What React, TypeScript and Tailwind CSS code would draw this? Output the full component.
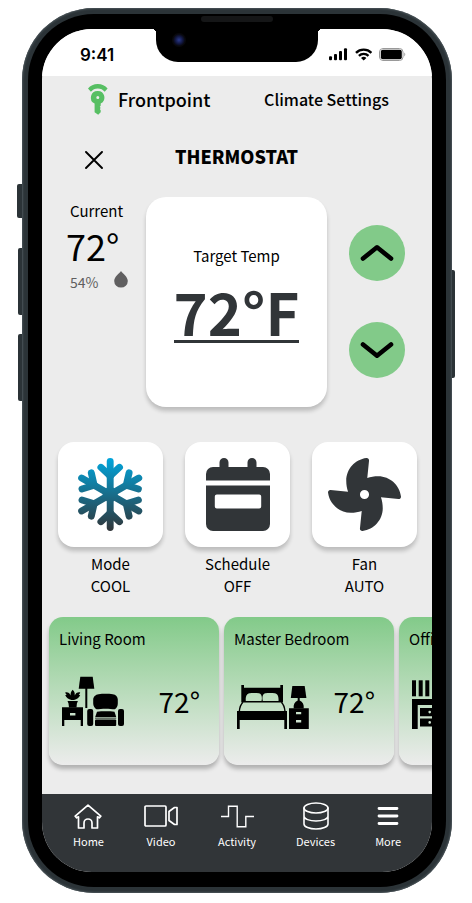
import type { ReactNode } from "react";
import { FaFan } from "react-icons/fa";

function FrontpointLogo() {
  return (
    <svg width="20" height="31" viewBox="0 0 20 31" fill="#57bf63" aria-hidden="true">
      <path d="M0 4.600C2.500 1.600 5.600.1 9.800.1s7.300 1.500 9.800 4.500l-2.900 3.200C15 5.700 12.700 4.500 9.800 4.500S4.600 5.700 2.900 7.800Z" />
      <path
        fillRule="evenodd"
        d="M9.800 6.900a6.700 6.700 0 0 1 2.900 12.700v2.100l-.9 1 .9 1.200-.9 1.100.9 1.200v2l-2.500 2.500-3.600-2.500v-8.600A6.700 6.700 0 0 1 9.800 6.900Zm0 5.200a1.500 1.500 0 1 0 0 3 1.500 1.500 0 0 0 0-3Z"
      />
    </svg>
  );
}

function StatusIcons() {
  return (
    <svg width="77" height="13" viewBox="0 0 77 13" aria-hidden="true">
      <rect x="0" y="8.300" width="3" height="4" rx="1" />
      <rect x="5" y="6" width="3" height="6.300" rx="1" />
      <rect x="10" y="3" width="3" height="9.300" rx="1" />
      <rect x="15" y="0.300" width="3" height="12" rx="1" />
      <g fill="none" stroke="#000" strokeWidth="2.400">
        <path d="M27 4.800a11 11 0 0 1 15.400 0" />
        <path d="M29.900 7.800a7 7 0 0 1 9.600 0" />
      </g>
      <path d="M32 9.900a4 4 0 0 1 5.400 0L34.700 12.600Z" />
      <rect x="50.500" y="0.500" width="23.500" height="12" rx="3.500" fill="none" stroke="#999" />
      <rect x="51.800" y="1.800" width="21" height="9.400" rx="2" />
      <path d="M75.300 4.600c1.300.5 1.300 3.300 0 3.800Z" fill="#999" />
    </svg>
  );
}

function SnowflakeIcon() {
  return (
    <svg width="65" height="73" viewBox="0 0 65 73" aria-hidden="true">
      <defs>
        <linearGradient id="ice" x1="0" y1="0" x2="0" y2="1">
          <stop offset="0" stopColor="#00a5dc" />
          <stop offset="1" stopColor="#313538" />
        </linearGradient>
        <mask id="flake">
          <g stroke="#fff" strokeWidth="6.900" strokeLinecap="round" strokeLinejoin="round" fill="none">
            {[0, 60, 120, 180, 240, 300].map((angle) => (
              <g key={angle} transform={`rotate(${angle} 32.2 36.5)`}>
                <path d="M32.200 36.500V3.500" />
                <path d="M22.900 9.300l9.300 8.700 9.300-8.700" />
                <path d="M28.600 20l3.600-6 3.600 6Z" fill="#fff" strokeWidth="0" />
              </g>
            ))}
            <circle cx="32.200" cy="36.500" r="7.500" fill="#fff" strokeWidth="0" />
          </g>
        </mask>
      </defs>
      <rect width="65" height="73" fill="url(#ice)" mask="url(#flake)" />
    </svg>
  );
}

function CalendarIcon() {
  return (
    <svg width="64" height="73" viewBox="0 0 64 73" fill="#313538" aria-hidden="true">
      <path d="M0 22.500V16a7 7 0 0 1 7-7h6.500V4.500a4.500 4.500 0 0 1 9 0V9h19V4.500a4.500 4.500 0 0 1 9 0V9H57a7 7 0 0 1 7 7v6.500Z" />
      <path
        fillRule="evenodd"
        d="M0 27.500h64V66a7 7 0 0 1-7 7H7a7 7 0 0 1-7-7ZM10.800 36.500a2 2 0 0 0-2 2v10a2 2 0 0 0 2 2h42.400a2 2 0 0 0 2-2v-10a2 2 0 0 0-2-2Z"
      />
    </svg>
  );
}

function LivingRoomIcon() {
  return (
    <svg width="62" height="53" viewBox="0 0 62 53" aria-hidden="true">
      <path d="M18.300.7h12.400l1.600 12H16.700Z" />
      <rect x="23.300" y="12" width="2" height="20" />
      <path d="M10.700 13.700c2 2 2.400 4 1.900 5.800l1.800-2.400c1.300-.8 2.600-.9 3.800-.6-.3 1-.7 1.800-1.500 2.500h1.500c-.9 2.400-3.300 4.500-6.200 5H9.400c-2.900-.5-5.300-2.600-6.200-5h1.500c-.8-.7-1.200-1.500-1.500-2.500 1.200-.3 2.500-.2 3.800.6l1.800 2.400c-.5-1.800-.1-3.800 1.900-5.800Z" />
      <path d="M5.500 25h10.400l-1 2.500-.4 4H7l-.5-4Z" />
      <path
        fillRule="evenodd"
        d="M0 31.300h21V50h-2.300v-6H2.300v6H0ZM8 37v2.400h5.400V37Z"
      />
      <path d="M36.500 18.200c4.500-.5 9.800-.5 14.300 0 3 .4 5 2.600 5 5.300v4c0 2-1 5-3 5.800-5-.9-13.300-.9-18.300 0-2-.8-3.300-3.800-3.300-5.800v-4c0-2.700 2.300-4.900 5.300-5.300Z" />
      <rect x="25.200" y="33" width="6" height="17" rx="2" />
      <rect x="56" y="33" width="6" height="17" rx="2" />
      <path d="M35 35.800c5-.6 12.500-.6 17.500 0l1.700 5.200H33.200Z" />
      <rect x="33" y="43.500" width="21.200" height="6.500" rx="1" />
      <rect x="33" y="41.700" width="21.200" height="0.800" />
    </svg>
  );
}

function BedroomIcon() {
  return (
    <svg width="72" height="44" viewBox="0 0 72 44" className="shrink-0" aria-hidden="true">
      <path
        fillRule="evenodd"
        d="M4.300 0H7v2.700h36.300V0H46v17.500H4.300ZM8.800 16H24.500c1-4 0-7.500-2.500-7.800-3.300-.4-6.500-.4-9.500 0C9.500 8.600 8.500 12 8.800 16ZM25.800 16H41.500c.3-4-.7-7.400-3.700-7.800-3-.4-6.200-.4-9.500 0-2.500.3-3.500 3.800-2.500 7.800Z"
      />
      <path d="M2.300 26.500C2.800 21.500 4 19 6 17.300M48 26.500c-.5-5-1.700-7.500-3.700-9.200" fill="none" stroke="#000" strokeWidth="1.400" />
      <path d="M0 26h50v18h-2.700v-9H2.700v9H0Z" />
      <path d="M55.300 1h12.400l1.700 12H53.800Z" />
      <path d="M60.700 13h2v2.500c3 1.200 4.500 4 4 8H56.700c-.5-4 1-6.800 4-8Z" />
      <path
        fillRule="evenodd"
        d="M52 23.300h19.800V44H52ZM59 26.900v2.400h5.200v-2.400ZM59 35v2.400h5.200V35Z"
      />
    </svg>
  );
}

function OfficeIcon() {
  return (
    <svg width="60" height="49" viewBox="0 0 60 49" className="shrink-0" aria-hidden="true">
      <rect x="0" y="0.300" width="4" height="16" />
      <rect x="6.700" y="0.300" width="4" height="16" />
      <rect x="13.300" y="0.300" width="4" height="16" />
      <path d="M0 19h60v30h-5.700V25H5.700v24H0Z" />
      <path
        fillRule="evenodd"
        d="M8 28h20v8.300H8ZM17.700 30.800a1.300 1.300 0 1 0 0 2.600 1.300 1.300 0 0 0 0-2.600ZM8 38.500h20v8H8ZM17.700 41.100a1.300 1.300 0 1 0 0 2.600 1.300 1.300 0 0 0 0-2.600Z"
      />
    </svg>
  );
}

function Chevron({ up = false }: { up?: boolean }) {
  return (
    <svg width="34" height="18" viewBox="0 0 34 18" fill="none" stroke="#000" strokeWidth="4.600" strokeLinecap="round" strokeLinejoin="round" aria-hidden="true">
      <path d={up ? "M3 14.500L17 3.300l14 11.200" : "M3 3.500l14 11.200L31 3.500"} />
    </svg>
  );
}

function ControlTile({ icon, name, value }: { icon: ReactNode; name: string; value: string }) {
  return (
    <button type="button" className="flex flex-1 flex-col items-center text-[15px] leading-[22px]">
      <span className="mb-[6px] flex h-[105px] w-full items-center justify-center rounded-2xl bg-white shadow-[0_4px_4px_rgba(0,0,0,0.2)]">
        {icon}
      </span>
      <span>{name}</span>
      <span>{value}</span>
    </button>
  );
}

function RoomCard({ name, icon, temp }: { name: string; icon: ReactNode; temp: string }) {
  return (
    <article className="h-[148px] w-[170px] shrink-0 rounded-[14px] bg-linear-to-b from-[#82ca89] to-[#ececec] px-[10px] pt-3 shadow-[0_4px_4px_rgba(0,0,0,0.25)]">
      <h2 className="text-[15px] leading-5 whitespace-nowrap">{name}</h2>
      <div className="mt-6 flex h-14 items-end justify-between pr-[9px] pl-[3px]">
        {icon}
        <span className="pb-3 text-[28px] leading-8">{temp}</span>
      </div>
    </article>
  );
}

function NavItem({ label, children }: { label: string; children: ReactNode }) {
  return (
    <a href="#" className="flex flex-col items-center text-[11px] leading-4 text-white">
      <span className="flex h-7 items-center">{children}</span>
      <span className="mt-[3px]">{label}</span>
    </a>
  );
}

const line = { fill: "none", stroke: "#fff", strokeLinecap: "round", strokeLinejoin: "round" } as const;

export default function App() {
  return (
    <div className="bg-white pt-2 pr-5 pb-[10px] pl-[22px] font-['Noto_Sans_CJK_JP','Noto_Sans_CJK_SC',sans-serif] text-black">
      <div className="relative rounded-[72px] bg-[#2b3337] p-[6px] shadow-[inset_0_0_2px_1px_#4b555a]">
        <span className="absolute top-44 -left-[5px] h-[34px] w-[5px] rounded-l-xs bg-[#2b3337]" />
        <span className="absolute top-60 -left-1 h-[67px] w-1 rounded-l-xs bg-[#2b3337]" />
        <span className="absolute top-[326px] -left-1 h-[67px] w-1 rounded-l-xs bg-[#2b3337]" />
        <span className="absolute top-[262px] -right-[3px] h-[108px] w-[3px] rounded-r-xs bg-[#2b3337]" />

        <div className="relative rounded-[66px] bg-black px-[14px] py-[15px]">
          <span className="absolute top-[2px] left-1/2 h-[6px] w-[72px] -translate-x-1/2 rounded-full bg-[#151617]" />

          <div className="relative overflow-hidden rounded-[50px] bg-[#ececec]">
            <div className="absolute top-0 left-1/2 h-[33px] w-[162px] -translate-x-1/2 rounded-b-[22px] bg-black">
              <span className="absolute top-0 -left-1 size-1 bg-[radial-gradient(circle_at_0_100%,transparent_4px,#000_4px)]" />
              <span className="absolute top-0 -right-1 size-1 bg-[radial-gradient(circle_at_100%_100%,transparent_4px,#000_4px)]" />
              <span className="absolute top-1 left-4 size-[14px] rounded-full bg-[radial-gradient(circle,#2b3a8c_0,#10153c_4px,#08080c_6px)]" />
            </div>

            <div className="flex h-[47px] items-center justify-between bg-white pt-1 pr-[26px] pl-[38px]">
              <span className="font-['Inter',sans-serif] text-[17px] leading-5 font-semibold">9:41</span>
              <StatusIcons />
            </div>

            <header className="flex h-[46px] items-center justify-between pr-[43px] pl-[46px]">
              <div className="flex items-center gap-[10px]">
                <FrontpointLogo />
                <span className="text-lg leading-6 font-medium">Frontpoint</span>
              </div>
              <span className="text-base leading-6 font-medium">Climate Settings</span>
            </header>

            <main>
              <div className="grid h-[75px] grid-cols-[104px_1fr_105px] items-center pb-1">
                <button type="button" aria-label="Close" className="flex justify-center pt-1">
                  <svg width="18" height="18" viewBox="0 0 18 18" stroke="#000" strokeWidth="1.900" strokeLinecap="round" aria-hidden="true">
                    <path d="M1 1l16 16M17 1L1 17" />
                  </svg>
                </button>
                <h1 className="pb-1 text-center text-lg leading-6 font-black">THERMOSTAT</h1>
              </div>

              <section className="grid h-[210px] grid-cols-[104px_1fr_105px]">
                <div>
                  <p className="mt-1 pl-7 text-[15px] leading-5">Current</p>
                  <p className="mt-1 pl-6 text-4xl leading-10">72°</p>
                  <div className="mt-[6px] flex items-center gap-4 pl-7 text-sm leading-5 text-[#605f60]">
                    <span>54%</span>
                    <svg width="14" height="17" viewBox="0 0 14 17" className="mb-1" fill="#605f60" aria-hidden="true">
                      <path d="M7 0c1.500 2.500 6.800 5.500 6.800 10a6.800 6.600 0 0 1-13.600 0C.2 5.500 5.500 2.500 7 0Z" />
                    </svg>
                  </div>
                </div>

                <div className="flex flex-col items-center rounded-[20px] bg-white pt-[47px] shadow-[0_4px_4px_rgba(0,0,0,0.2)]">
                  <p className="text-[15px] leading-6">Target Temp</p>
                  <p className="mt-[14px] border-b-3 border-[#313538] text-[58px] leading-[58px] font-bold text-[#313538]">72°F</p>
                </div>

                <div className="flex flex-col items-center justify-center gap-[41px] pr-[5px] pb-[2px]">
                  <button type="button" aria-label="Raise temperature" className="flex size-14 items-center justify-center rounded-full bg-[#82ca89]">
                    <Chevron up />
                  </button>
                  <button type="button" aria-label="Lower temperature" className="flex size-14 items-center justify-center rounded-full bg-[#82ca89]">
                    <Chevron />
                  </button>
                </div>
              </section>

              <section className="mt-[35px] flex gap-[22px] pr-[15px] pl-4">
                <ControlTile name="Mode" value="COOL" icon={<SnowflakeIcon />} />
                <ControlTile name="Schedule" value="OFF" icon={<CalendarIcon />} />
                <ControlTile name="Fan" value="AUTO" icon={<FaFan size={73} color="#313538" />} />
              </section>

              <section className="mt-5 flex gap-[5px] overflow-hidden pb-[29px] pl-[7px]">
                <RoomCard name="Living Room" temp="72°" icon={<LivingRoomIcon />} />
                <RoomCard name="Master Bedroom" temp="72°" icon={<BedroomIcon />} />
                <RoomCard name="Office" temp="72°" icon={<OfficeIcon />} />
              </section>
            </main>

            <nav className="flex h-[78px] justify-between bg-[#313538] px-[31px] pt-2">
              <NavItem label="Home">
                <svg width="28" height="25" viewBox="0 0 28 25" {...line} strokeWidth="1.700">
                  <path d="M14 1.200L1.200 12.200l1.500 1.600 1.800-1V24h5.500v-5a4 4 0 0 1 8 0v5h5.500V12.800l1.800 1 1.500-1.600Z" />
                </svg>
              </NavItem>
              <NavItem label="Video">
                <svg width="34" height="22" viewBox="0 0 34 22" {...line} strokeWidth="1.700">
                  <rect x="1" y="1" width="21" height="20" rx="1" />
                  <path d="M25 6.500l5.500-4H33v17h-2.500l-5.500-4Z" />
                </svg>
              </NavItem>
              <NavItem label="Activity">
                <svg width="33" height="23" viewBox="0 0 33 23" fill="none" stroke="#fff" strokeWidth="1.400">
                  <path d="M0 11.500h7.500V1.300h8.700v20.400h8.600V11.500H33" />
                </svg>
              </NavItem>
              <NavItem label="Devices">
                <svg width="26" height="28" viewBox="0 0 26 28" {...line} strokeWidth="1.600">
                  <ellipse cx="13" cy="6" rx="12" ry="5" />
                  <path d="M1 6v16c0 2.800 5.400 5 12 5s12-2.200 12-5V6M1 14.300c0 2.600 5.400 4.700 12 4.700s12-2.100 12-4.700" />
                </svg>
              </NavItem>
              <NavItem label="More">
                <svg width="22" height="18" viewBox="0 0 22 18" {...line} strokeWidth="2.800">
                  <path d="M2 1.500h18M2 9h18M2 16.500h18" />
                </svg>
              </NavItem>
            </nav>
          </div>
        </div>
      </div>
    </div>
  );
}
